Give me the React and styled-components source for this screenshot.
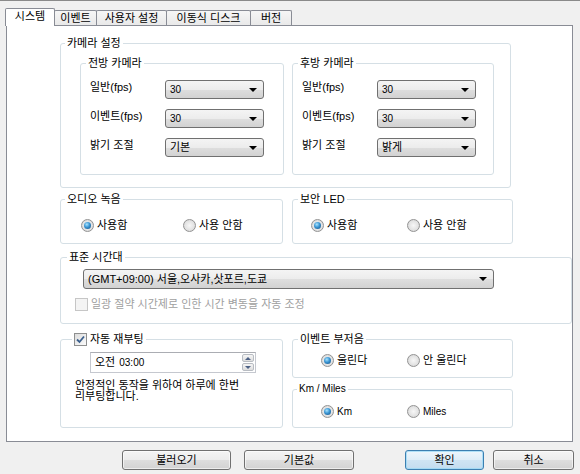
import React from 'react'
import styled, { createGlobalStyle } from 'styled-components'

export default function App() {
  return (
    <Window>
      <GlobalStyle />
      <TabStrip>
        <Tab $active $w={50}>시스템</Tab>
        <Tab $w={43}>이벤트</Tab>
        <Tab $w={71}>사용자 설정</Tab>
        <Tab $w={85}>이동식 디스크</Tab>
        <Tab $w={42}>버전</Tab>
      </TabStrip>

      <Panel>
        <Group $w={451} $pt={6} $pb={12} $pl={19}>
          <Legend $x={7} $pl={19}>카메라 설정</Legend>
          <CameraGrid>
            <CameraBox title="전방 카메라" brightness="기본" />
            <CameraBox title="후방 카메라" brightness="밝게" />
          </CameraGrid>
        </Group>

        <TwoCols $mt={4}>
          <Group $pt={13} $pb={11} $pl={20}>
            <Legend $x={7} $pl={20}>오디오 녹음</Legend>
            <Radios $pitch={102}>
              <Radio on label="사용함" />
              <Radio label="사용 안함" />
            </Radios>
          </Group>
          <Group $pt={13} $pb={11} $pl={18}>
            <Legend $x={8} $pl={18}>보안 LED</Legend>
            <Radios $pitch={96}>
              <Radio on label="사용함" />
              <Radio label="사용 안함" />
            </Radios>
          </Group>
        </TwoCols>

        <Group $mt={6} $pt={5} $pb={12} $pl={14}>
          <Legend $x={9} $pl={14}>표준 시간대</Legend>
          <Select $w={411} $h={20} $indent={8}>
            <span>(GMT+09:00) 서울,오사카,삿포르,도쿄</span>
            <Arrow />
          </Select>
          <CheckRow $disabled>
            <Check $disabled />
            <span>일광 절약 시간제로 인한 시간 변동을 자동 조정</span>
          </CheckRow>
        </Group>

        <TwoCols $mt={8}>
          <Group $pt={6} $pb={0} $pl={0}>
            <Legend $x={14} $pl={0}>
              <Check $on />
              <span>자동 재부팅</span>
            </Legend>
            <Spin>
              <SpinText>
                <span>오전</span>
                <Time>03:00</Time>
              </SpinText>
              <SpinButtons>
                <SpinBtn><Tri $up /></SpinBtn>
                <SpinBtn><Tri /></SpinBtn>
              </SpinButtons>
            </Spin>
            <Note>
              안정적인 동작을 위하여 하루에 한번
              <br />
              리부팅합니다.
            </Note>
          </Group>

          <Stack>
            <Group $pt={8} $pb={10} $pl={28}>
              <Legend $x={8} $pl={28}>이벤트 부저음</Legend>
              <Radios $pitch={86}>
                <Radio on label="울린다" />
                <Radio label="안 울린다" />
              </Radios>
            </Group>
            <Group $mt={4} $pt={9} $pb={9} $pl={28}>
              <Legend $x={7} $pl={28} $small>Km / Miles</Legend>
              <Radios $pitch={86} $small>
                <Radio on label="Km" />
                <Radio label="Miles" />
              </Radios>
            </Group>
          </Stack>
        </TwoCols>
      </Panel>

      <ButtonBar>
        <Button $w={109}>불러오기</Button>
        <Button $w={110}>기본값</Button>
        <Button $w={79} $default>확인</Button>
        <Button $w={81}>취소</Button>
      </ButtonBar>
    </Window>
  )
}

function CameraBox({ title, brightness }) {
  return (
    <Group $pt={10} $pb={17} $pl={9}>
      <Legend $x={8} $pl={9}>{title}</Legend>
      <FieldGrid>
        <FieldLabel>일반(fps)</FieldLabel>
        <Select $w={99}><Num>30</Num><Arrow /></Select>
        <FieldLabel>이벤트(fps)</FieldLabel>
        <Select $w={99}><Num>30</Num><Arrow /></Select>
        <FieldLabel>밝기 조절</FieldLabel>
        <Select $w={99}><span>{brightness}</span><Arrow /></Select>
      </FieldGrid>
    </Group>
  )
}

function Radio({ on, label }) {
  return (
    <RadioItem>
      <RadioDot $on={on} />
      <span>{label}</span>
    </RadioItem>
  )
}

function Check({ $on, $disabled }) {
  return (
    <CheckBox $disabled={$disabled}>
      {$on && (
        <svg width="9" height="9" viewBox="0 0 9 9">
          <path d="M1 4.5 L3.5 7 L8 1.5" fill="none" stroke="#3b5f8c" strokeWidth="1.8" />
        </svg>
      )}
    </CheckBox>
  )
}

////////////////////////////////////////////////////
// Styles
////////////////////////////////////////////////////

const GlobalStyle = createGlobalStyle`
  html, body { margin: 0; padding: 0; background: #f0f0f0; }
  body {
    font-family: "Liberation Sans", "Noto Sans CJK KR", sans-serif;
    font-size: 11px;
    color: #000;
  }
  * { box-sizing: border-box; }
`

const Window = styled.div`
  width: 580px;
  height: 474px;
  border-top: 1px solid #8a8a8a;
  background: #f0f0f0;
  overflow: hidden;
`

const TabStrip = styled.div`
  display: flex;
  align-items: flex-end;
  height: 17px;
  margin: 7px 0 0 5px;
`

const Tab = styled.div`
  width: ${p => p.$w}px;
  height: ${p => (p.$active ? 18 : 15)}px;
  margin-left: ${p => (p.$active ? 0 : -1)}px;
  margin-bottom: ${p => (p.$active ? -1 : 0)}px;
  position: relative;
  z-index: ${p => (p.$active ? 2 : 1)};
  display: flex;
  align-items: center;
  justify-content: center;
  padding-bottom: ${p => (p.$active ? 2 : 0)}px;
  line-height: 13px;
  border: 1px solid #898c95;
  border-bottom: none;
  border-radius: 2px 2px 0 0;
  background: ${p => (p.$active ? '#fff' : 'linear-gradient(#f6f6f6, #e9e9e9)')};
`

const Panel = styled.div`
  width: 567px;
  height: 417px;
  margin-left: 6px;
  padding: 10px 0 0 53px;
  border: 1px solid #898c95;
  background: #fff;
  display: flex;
  flex-direction: column;
`

const Group = styled.fieldset`
  margin: ${p => p.$mt || 0}px 0 0 0;
  padding: ${p => p.$pt}px 0 ${p => p.$pb}px ${p => p.$pl}px;
  width: ${p => (p.$w ? `${p.$w}px` : 'auto')};
  min-width: 0;
  border: 1px solid #d5dfe5;
  border-radius: 3px;
`

const Legend = styled.legend`
  margin-left: ${p => p.$x - 3 - p.$pl}px;
  padding: 0 2px;
  height: 14px;
  line-height: 14px;
  font-size: ${p => (p.$small ? 10 : 11)}px;
  display: flex;
  align-items: center;
  gap: 3px;
`

const CameraGrid = styled.div`
  display: grid;
  grid-template-columns: 204px 202px;
  column-gap: 8px;
`

const FieldGrid = styled.div`
  display: grid;
  grid-template-columns: 75px 99px;
  grid-auto-rows: 19px;
  row-gap: 10px;
  align-items: center;
`

const FieldLabel = styled.div`
  line-height: 13px;
  margin-bottom: 4px;
`

const Select = styled.div`
  width: ${p => p.$w}px;
  height: ${p => p.$h || 19}px;
  margin-left: ${p => p.$indent || 0}px;
  display: flex;
  align-items: center;
  justify-content: space-between;
  padding: 0 6px 0 4px;
  border: 1px solid #707070;
  border-radius: 3px;
  background: linear-gradient(#f4f4f4 0%, #ececec 50%, #dedede 51%, #d2d2d2 100%);
  line-height: 13px;
`

const Num = styled.span`
  font-size: 10px;
`

const Arrow = styled.span`
  width: 0;
  height: 0;
  border-left: 4px solid transparent;
  border-right: 4px solid transparent;
  border-top: 4px solid #000;
`

const TwoCols = styled.div`
  display: grid;
  grid-template-columns: 223px 221px;
  column-gap: 9px;
  margin-top: ${p => p.$mt || 0}px;
`

const Stack = styled.div`
  display: flex;
  flex-direction: column;
`

const Radios = styled.div`
  display: grid;
  grid-template-columns: ${p => p.$pitch}px auto;
  font-size: ${p => (p.$small ? 10 : 11)}px;
`

const RadioItem = styled.div`
  display: flex;
  align-items: center;
  gap: 3px;
  height: 13px;
  line-height: 13px;
`

const RadioDot = styled.span`
  width: 13px;
  height: 13px;
  flex: none;
  border-radius: 50%;
  border: 1px solid #939393;
  background: radial-gradient(circle at 50% 50%, #f7f7f7 0%, #e2e2e2 60%, #c9c9c9 100%);
  display: flex;
  align-items: center;
  justify-content: center;
  &::after {
    content: '';
    display: ${p => (p.$on ? 'block' : 'none')};
    width: 7px;
    height: 7px;
    border-radius: 50%;
    background: radial-gradient(circle at 40% 35%, #a8e4ff 0%, #3a95d3 45%, #134b7e 100%);
  }
`

const CheckRow = styled.div`
  display: flex;
  align-items: center;
  gap: 3px;
  margin-top: 9px;
  height: 13px;
  line-height: 13px;
  color: ${p => (p.$disabled ? '#a0a0a0' : '#000')};
`

const CheckBox = styled.span`
  width: 13px;
  height: 13px;
  flex: none;
  display: flex;
  align-items: center;
  justify-content: center;
  border: 1px solid ${p => (p.$disabled ? '#c6c6c6' : '#8e8f8f')};
  background: ${p => (p.$disabled ? '#f4f4f4' : 'linear-gradient(135deg, #dcdcdc, #fbfbfb)')};
`

const Spin = styled.div`
  width: 166px;
  height: 21px;
  margin-left: 29px;
  display: flex;
  align-items: center;
  justify-content: space-between;
  padding: 0 1px 0 4px;
  border: 1px solid #c5c8cf;
  border-top-color: #abadb3;
  background: #fff;
`

const SpinText = styled.div`
  display: flex;
  align-items: center;
  gap: 4px;
  line-height: 13px;
`

const Time = styled.span`
  font-size: 10px;
`

const SpinButtons = styled.div`
  display: flex;
  flex-direction: column;
  gap: 1px;
`

const SpinBtn = styled.span`
  width: 12px;
  height: 8px;
  display: flex;
  align-items: center;
  justify-content: center;
  border: 1px solid #b8bcc2;
  border-radius: 2px;
  background: linear-gradient(#f5f5f5, #dedede);
`

const Tri = styled.span`
  width: 0;
  height: 0;
  border-left: 3px solid transparent;
  border-right: 3px solid transparent;
  ${p => (p.$up ? 'border-bottom: 3px solid #4d6185;' : 'border-top: 3px solid #4d6185;')}
`

const Note = styled.div`
  margin: 7px 0 0 14px;
  line-height: 11px;
`

const ButtonBar = styled.div`
  display: flex;
  margin-top: 8px;
  padding: 0 6px 0 122px;
  gap: 13px;
  & > :nth-child(3) { margin-left: auto; }
  & > :nth-child(4) { margin-left: -4px; }
`

const Button = styled.button`
  width: ${p => p.$w}px;
  height: 20px;
  padding: 0;
  font: inherit;
  font-size: 11px;
  line-height: 13px;
  color: #000;
  border: 1px solid ${p => (p.$default ? '#3c7fb1' : '#707070')};
  border-radius: 3px;
  background: ${p =>
    p.$default
      ? 'linear-gradient(#eef6fc 0%, #deedf8 50%, #cfe4f3 51%, #c3dcef 100%)'
      : 'linear-gradient(#f4f4f4 0%, #ececec 50%, #dedede 51%, #d2d2d2 100%)'};
  box-shadow: inset 0 0 0 1px ${p => (p.$default ? 'rgba(150,215,245,0.7)' : 'rgba(255,255,255,0.6)')};
`
